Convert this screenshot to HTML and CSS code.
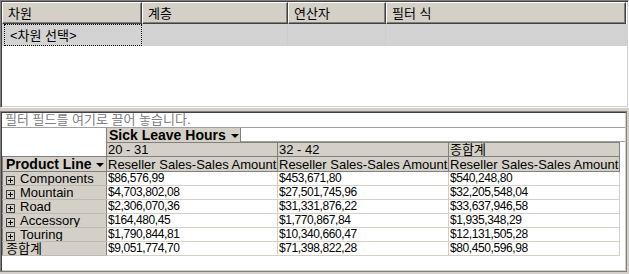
FILE: index.html
```html
<!DOCTYPE html>
<html lang="ko">
<head>
    <meta charset="UTF-8">
    <title>필터 편집</title>
    <link rel="stylesheet" href="styles.css">
</head>
<body>

    <div class="panel criteria">
        <div class="grid-head">
            <div class="hcell col-dim">차원</div>
            <div class="hcell col-hier">계층</div>
            <div class="hcell col-op">연산자</div>
            <div class="hcell col-expr">필터 식</div>
        </div>
        <div class="grid-row">
            <div class="rcell col-dim focus">&lt;차원 선택&gt;</div>
            <div class="rcell col-hier"></div>
            <div class="rcell col-op"></div>
            <div class="rcell col-expr"></div>
        </div>
    </div>

    <div class="panel pivot">
        <div class="filter-zone">필터 필드를 여기로 끌어 놓습니다.</div>
        <div class="column-zone">
            <div class="corner-gap"></div>
            <div class="column-fields">
                <div class="field-btn">Sick Leave Hours <span class="drop-arrow"></span></div>
            </div>
        </div>
        <table class="pivot-table">
            <colgroup>
                <col class="w-row">
                <col class="w-data">
                <col class="w-data">
                <col class="w-data">
            </colgroup>
            <tr class="col-labels">
                <td class="corner"></td>
                <td class="head">20 - 31</td>
                <td class="head">32 - 42</td>
                <td class="head">종합계</td>
            </tr>
            <tr class="measure-labels">
                <td class="head row-field">Product Line <span class="drop-arrow"></span></td>
                <td class="head">Reseller Sales-Sales Amount</td>
                <td class="head">Reseller Sales-Sales Amount</td>
                <td class="head">Reseller Sales-Sales Amount</td>
            </tr>
            <tr>
                <td class="row-head"><span class="expand"></span>Components</td>
                <td>$86,576,99</td>
                <td>$453,671,80</td>
                <td>$540,248,80</td>
            </tr>
            <tr>
                <td class="row-head"><span class="expand"></span>Mountain</td>
                <td>$4,703,802,08</td>
                <td>$27,501,745,96</td>
                <td>$32,205,548,04</td>
            </tr>
            <tr>
                <td class="row-head"><span class="expand"></span>Road</td>
                <td>$2,306,070,36</td>
                <td>$31,331,876,22</td>
                <td>$33,637,946,58</td>
            </tr>
            <tr>
                <td class="row-head"><span class="expand"></span>Accessory</td>
                <td>$164,480,45</td>
                <td>$1,770,867,84</td>
                <td>$1,935,348,29</td>
            </tr>
            <tr>
                <td class="row-head"><span class="expand"></span>Touring</td>
                <td>$1,790,844,81</td>
                <td>$10,340,660,47</td>
                <td>$12,131,505,28</td>
            </tr>
            <tr>
                <td class="row-head">종합계</td>
                <td>$9,051,774,70</td>
                <td>$71,398,822,28</td>
                <td>$80,450,596,98</td>
            </tr>
        </table>
    </div>

</body>
</html>
```

FILE: styles.css
```css
body {
    margin: 0;
    background-color: #d4d0c8;
    font-family: 'Liberation Sans', 'Noto Sans CJK KR', sans-serif;
    font-size: 13px;
    color: #000;
}
.panel {
    background-color: #fff;
    border-top: 1px solid #808080;
    border-left: 1px solid #808080;
    border-right: 1px solid #fff;
    border-bottom: 1px solid #fff;
    box-shadow: inset 1px 1px 0 #404040, inset -1px -1px 0 #d4d0c8;
    padding: 1px;
}
.criteria {
    height: 104px;
}
.pivot {
    margin-top: 3px;
    width: 623px;
    height: 157px;
    border-right-color: #808080;
    border-bottom-color: #808080;
}
.grid-head {
    display: flex;
    height: 22px;
}
.hcell {
    box-sizing: border-box;
    background-color: #d4d0c8;
    border-top: 1px solid #fff;
    border-left: 1px solid #fff;
    border-right: 1px solid #404040;
    border-bottom: 1px solid #404040;
    box-shadow: inset -1px -1px 0 #808080;
    padding: 3px 0 0 5px;
    line-height: 15px;
}
.col-dim { width: 140px; }
.col-hier { width: 146px; }
.col-op { width: 98px; }
.col-expr { width: 240px; }
.grid-row {
    display: flex;
    height: 22px;
    background-color: #d3d3d3;
}
.rcell {
    box-sizing: border-box;
    border-right: 1px solid #cdcdcd;
    padding: 3px 0 0 8px;
    line-height: 15px;
}
.rcell.focus {
    width: 138px;
    margin-left: 2px;
    border: 1px dotted #000;
    padding-left: 5px;
}
.filter-zone {
    height: 14px;
    line-height: 14px;
    padding-left: 3px;
    color: #808080;
    border-bottom: 1px solid #a0a0a0;
}
.column-zone {
    display: flex;
    height: 14px;
}
.corner-gap {
    width: 104px;
}
.column-fields {
    flex: 1;
    border-bottom: 1px solid #a0a0a0;
}
.field-btn {
    box-sizing: border-box;
    width: 135px;
    height: 14px;
    background-color: #d4d0c8;
    border-right: 1px solid #808080;
    border-left: 1px solid #808080;
    padding-left: 2px;
    font-weight: bold;
    font-size: 14px;
    line-height: 14px;
}
.drop-arrow {
    display: inline-block;
    width: 0;
    height: 0;
    border-left: 4px solid transparent;
    border-right: 4px solid transparent;
    border-top: 4px solid #000;
    vertical-align: middle;
    margin-left: 1px;
}
.pivot-table {
    border-collapse: collapse;
    table-layout: fixed;
    width: 617px;
}
.w-row { width: 104px; }
.w-data { width: 171px; }
.pivot-table td {
    padding: 0 0 0 1px;
    height: 13px;
    line-height: 13px;
    font-size: 12px;
    letter-spacing: -0.4px;
    border: 1px solid #d4d0c8;
    white-space: nowrap;
    overflow: hidden;
}
.pivot-table td.corner {
    border: none;
    border-right: 1px solid #808080;
}
.pivot-table td.head {
    background-color: #d4d0c8;
    border: 1px solid #808080;
    font-size: 13px;
    letter-spacing: 0;
}
.measure-labels td {
    height: 14px;
}
.pivot-table td.row-field {
    font-weight: bold;
    font-size: 14px;
    padding-left: 3px;
}
.pivot-table td.row-head {
    background-color: #d4d0c8;
    border-color: #bdbab3;
    border-left-color: #808080;
    border-right-color: #808080;
    padding-left: 3px;
    font-size: 13px;
    letter-spacing: 0;
}
.expand {
    display: inline-block;
    box-sizing: border-box;
    width: 9px;
    height: 9px;
    border: 1px solid #404040;
    margin-right: 5px;
    vertical-align: -2px;
    background:
        linear-gradient(#000, #000) center / 5px 1px no-repeat,
        linear-gradient(#000, #000) center / 1px 5px no-repeat;
}
```
